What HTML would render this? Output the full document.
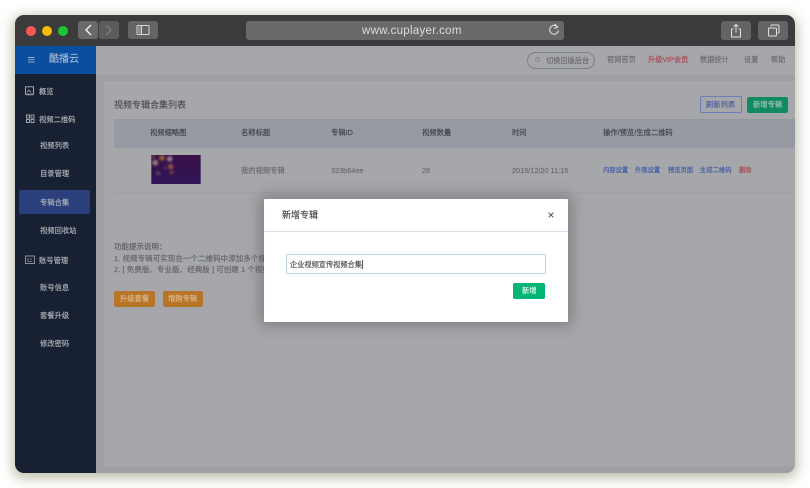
<!DOCTYPE html>
<html lang="zh">
<head>
<meta charset="utf-8">
<title>新增专辑</title>
<style>
html,body{margin:0;padding:0;width:810px;height:488px;overflow:hidden;background:#fff;}
body{position:relative;font-family:"Liberation Sans","Noto Sans CJK SC",sans-serif;}
.a{position:absolute;}
.t{position:absolute;white-space:nowrap;line-height:12px;height:12px;-webkit-text-stroke:.14px currentColor;}
#win{position:absolute;left:15px;top:15px;width:780px;height:458px;border-radius:9px;overflow:hidden;background:#a6a7ab;filter:blur(.32px);}
#shadow{position:absolute;left:15px;top:15px;width:780px;height:458px;border-radius:9px;box-shadow:0 3px 13px 2px rgba(95,95,50,.42);}
.btn{position:absolute;background:#646466;border-radius:3px;}
.m{color:#b0b3b9;font-size:7.3px;}
.h{color:#3f4146;font-size:7.3px;}
.n{color:#68696e;font-size:7.3px;}
.l{color:#3f58a6;font-size:6.3px;}
.o{color:#4f5055;font-size:7.3px;}
</style>
</head>
<body>
<div id="shadow"></div>
<div id="win">
  <!-- title bar -->
  <div class="a" style="left:0;top:0;width:780px;height:31px;background:#3b3b3d;"></div>
  <div class="a" style="left:11px;top:11px;width:10px;height:10px;border-radius:50%;background:#fc5753;"></div>
  <div class="a" style="left:27px;top:11px;width:10px;height:10px;border-radius:50%;background:#fdbc00;"></div>
  <div class="a" style="left:43px;top:11px;width:10px;height:10px;border-radius:50%;background:#19c832;"></div>

  <div class="btn" style="left:63px;top:6px;width:20px;height:18px;background:#69696b;"></div>
  <div class="btn" style="left:84px;top:6px;width:20px;height:18px;background:#5c5c5e;"></div>
  <svg class="a" style="left:63px;top:6px" width="41" height="18" viewBox="0 0 41 18" fill="none">
    <path d="M13 4 L8 9 L13 14" stroke="#f2f2f2" stroke-width="1.4"/>
    <path d="M28 4 L33 9 L28 14" stroke="#818183" stroke-width="1.2"/>
  </svg>
  <div class="btn" style="left:113px;top:6px;width:30px;height:18px;"></div>
  <svg class="a" style="left:113px;top:6px" width="30" height="18" viewBox="0 0 30 18" fill="none">
    <rect x="9" y="4.5" width="12" height="9" rx="1" stroke="#d8d8d8" stroke-width="1"/>
    <rect x="10" y="5.5" width="3" height="7" fill="#8e8e90"/>
    <path d="M13.5 5V13" stroke="#d8d8d8" stroke-width="1"/>
  </svg>

  <div class="btn" style="left:231px;top:6px;width:318px;height:19px;background:#69696b;"></div>
  <div class="t" style="left:347px;top:8.5px;line-height:15px;height:15px;font-size:11.5px;letter-spacing:.28px;color:#dcdcdc;-webkit-text-stroke:0;">www.cuplayer.com</div>
  <svg class="a" style="left:532px;top:8px" width="14" height="15" viewBox="0 0 14 15" fill="none">
    <path d="M10.6 4.2 A4.4 4.4 0 1 0 11.4 7.5" stroke="#e2e2e2" stroke-width="1"/>
    <path d="M7.5 0.8 L10.8 4 L7 5.4" stroke="#e2e2e2" stroke-width="1"/>
  </svg>

  <div class="btn" style="left:706px;top:6px;width:30px;height:19px;"></div>
  <svg class="a" style="left:706px;top:6px" width="30" height="19" viewBox="0 0 30 19" fill="none">
    <path d="M12.5 8H10.5V16H19.5V8H17.5" stroke="#e2e2e2" stroke-width="1"/>
    <path d="M15 11.5V3.5M12.7 5.8L15 3.5L17.3 5.8" stroke="#e2e2e2" stroke-width="1"/>
  </svg>
  <div class="btn" style="left:743px;top:6px;width:30px;height:19px;"></div>
  <svg class="a" style="left:743px;top:6px" width="30" height="19" viewBox="0 0 30 19" fill="none">
    <rect x="10.5" y="7" width="8" height="8" rx="1" stroke="#e2e2e2" stroke-width="1"/>
    <path d="M13 5.5V5A1 1 0 0 1 14 4H20A1 1 0 0 1 21 5V11A1 1 0 0 1 20 12H19.5" stroke="#e2e2e2" stroke-width="1"/>
  </svg>

  <!-- sidebar -->
  <div class="a" style="left:0;top:31px;width:81px;height:427px;background:#182133;"></div>
  <div class="a" style="left:0;top:31px;width:81px;height:28px;background:#0a4e9f;"></div>
  <svg class="a" style="left:13px;top:41px" width="7" height="8" viewBox="0 0 7 8"><path d="M0 1.5H6.5M0 3.8H6.5M0 6.1H6.5" stroke="#9fb4d0" stroke-width=".9"/></svg>
  <div class="t" style="left:34px;top:39px;font-size:10px;color:#a3b6cf;">酷播云</div>

  <svg class="a" style="left:10px;top:71px" width="10" height="10" viewBox="0 0 10 10" fill="none">
    <rect x=".5" y=".8" width="8" height="7.4" stroke="#a3a6ab"/>
    <path d="M2 6.5L4 4L6 6.5M1 8.8H8" stroke="#8f949b"/>
  </svg>
  <div class="t m" style="left:24px;top:71px;">概览</div>

  <svg class="a" style="left:11px;top:99px" width="9" height="10" viewBox="0 0 9 10" fill="none" stroke="#9aa0a6">
    <rect x=".5" y="1" width="3" height="3"/><rect x="5" y="1" width="3" height="3"/>
    <rect x=".5" y="5.5" width="3" height="3"/><rect x="5" y="5.5" width="3" height="3"/>
  </svg>
  <div class="t m" style="left:24px;top:99px;">视频二维码</div>
  <div class="t m" style="left:25px;top:125px;">视频列表</div>
  <div class="t m" style="left:25px;top:153px;">目录管理</div>

  <div class="a" style="left:4px;top:175px;width:71px;height:24px;background:#2a3f7b;border-radius:2px;"></div>
  <div class="t m" style="left:25px;top:182px;">专辑合集</div>
  <div class="t m" style="left:25px;top:210px;">视频回收站</div>

  <svg class="a" style="left:10px;top:240px" width="10" height="10" viewBox="0 0 10 10" fill="none">
    <rect x=".5" y="1" width="9" height="7.5" stroke="#989aa0" stroke-width=".9"/>
    <path d="M3 3V6.5M3 6.5H7M6 3V5" stroke="#8f9298" stroke-width=".8"/>
  </svg>
  <div class="t m" style="left:24px;top:240px;">账号管理</div>
  <div class="t m" style="left:25px;top:267px;">账号信息</div>
  <div class="t m" style="left:25px;top:295px;">套餐升级</div>
  <div class="t m" style="left:25px;top:323px;">修改密码</div>

  <!-- top nav -->
  <div class="a" style="left:81px;top:31px;width:699px;height:28px;background:#a6a7ab;"></div>
  <div class="a" style="left:81px;top:59px;width:699px;height:7px;background:#9f9fa4;"></div>
  <div class="a" style="left:81px;top:66px;width:8px;height:392px;background:#9f9fa4;"></div>
  <div class="a" style="left:81px;top:451px;width:699px;height:7px;background:#9f9fa4;"></div>
  <div class="a" style="left:89px;top:66px;width:691px;height:385px;background:#a6a7ab;border-radius:2px;"></div>

  <div class="a" style="left:512px;top:37px;width:66px;height:15px;border:1px solid #7d7f86;border-radius:9px;"></div>
  <div class="t" style="left:519px;top:40px;font-size:7px;color:#777a80;">&#9737;</div>
  <div class="t" style="left:531px;top:40px;font-size:7.2px;color:#696b71;">切换旧版后台</div>
  <div class="t" style="left:592px;top:39px;font-size:7.2px;color:#696b71;">官网首页</div>
  <div class="t" style="left:633px;top:39px;font-size:7.2px;color:#a8444f;">升级VIP会员</div>
  <div class="t" style="left:685px;top:39px;font-size:7.2px;color:#696b71;">数据统计</div>
  <div class="t" style="left:729px;top:39px;font-size:7.2px;color:#696b71;">设置</div>
  <div class="t" style="left:756px;top:39px;font-size:7.2px;color:#696b71;">帮助</div>

  <!-- card -->
  <div class="t" style="left:99px;top:84px;font-size:9px;color:#4c4e53;">视频专辑合集列表</div>
  <div class="a" style="left:685px;top:81px;width:40px;height:15px;border:1px solid #6a7fb8;border-radius:2px;box-sizing:content-box;"></div>
  <div class="t" style="left:691px;top:84px;font-size:7.3px;color:#4a5b9c;">刷新列表</div>
  <div class="a" style="left:732px;top:81.5px;width:41px;height:16px;background:#0f8a63;border-radius:2px;"></div>
  <div class="t" style="left:738px;top:84px;font-size:7.3px;color:#a6c2b6;">新增专辑</div>

  <div class="a" style="left:99px;top:104px;width:681px;height:29px;background:#979aa2;border-top:1px solid #96979c;box-sizing:border-box;"></div>
  <div class="t h" style="left:135px;top:112px;">视频缩略图</div>
  <div class="t h" style="left:226px;top:112px;">名称标题</div>
  <div class="t h" style="left:316px;top:112px;">专辑ID</div>
  <div class="t h" style="left:407px;top:112px;">视频数量</div>
  <div class="t h" style="left:497px;top:112px;">时间</div>
  <div class="t h" style="left:588px;top:112px;">操作/预览/生成二维码</div>

  <svg class="a" style="left:136px;top:139.5px;" width="50" height="29" viewBox="0 0 51 30">
    <defs>
      <linearGradient id="bg" x1="0" y1="0" x2="0" y2="1"><stop offset="0" stop-color="#3a1048"/><stop offset="1" stop-color="#2e1558"/></linearGradient>
      <filter id="bl"><feGaussianBlur stdDeviation="1.2"/></filter>
    </defs>
    <rect width="51" height="30" fill="url(#bg)"/>
    <g filter="url(#bl)">
      <circle cx="4" cy="8" r="3" fill="#8f7a7c"/>
      <circle cx="11" cy="3" r="3" fill="#8a5e3a"/>
      <circle cx="19" cy="4" r="3" fill="#8f7880"/>
      <circle cx="20" cy="12" r="3" fill="#885048"/>
      <circle cx="7" cy="19" r="2.5" fill="#593c5a"/>
      <circle cx="21" cy="18" r="2" fill="#74423f"/>
      <circle cx="2" cy="2" r="2" fill="#684038"/>
      <circle cx="14" cy="13" r="1.5" fill="#5a3450"/>
    </g>
  </svg>

  <div class="t n" style="left:226px;top:150px;">我的视频专辑</div>
  <div class="t n" style="left:316px;top:150px;">323b64ee</div>
  <div class="t n" style="left:407px;top:150px;">28</div>
  <div class="t n" style="left:497px;top:150px;">2019/12/20 11:16</div>
  <div class="t l" style="left:588px;top:150px;">内容设置</div>
  <div class="t l" style="left:620px;top:150px;">外观设置</div>
  <div class="t l" style="left:653px;top:150px;">预览页面</div>
  <div class="t l" style="left:685px;top:150px;">生成二维码</div>
  <div class="t" style="left:724px;top:150px;font-size:6.3px;color:#a8444f;">删除</div>
  <div class="a" style="left:99px;top:177px;width:681px;height:1px;background:#a0a1a5;"></div>

  <div class="t" style="left:99px;top:226px;font-size:7.5px;color:#5c5e63;">功能提示说明：</div>
  <div class="t" style="left:99px;top:238px;font-size:7.5px;letter-spacing:.05px;color:#63656a;">1. 视频专辑可实现在一个二维码中添加多个视频</div>
  <div class="t" style="left:99px;top:249px;font-size:7.5px;letter-spacing:.05px;color:#63656a;">2. [ 免费版、专业版、经典版 ] 可创建 1 个视频专辑</div>

  <div class="a" style="left:99px;top:276px;width:41px;height:16px;background:#b8752a;border-radius:2px;"></div>
  <div class="t" style="left:105px;top:278px;font-size:7.3px;color:#ddb98f;">升级套餐</div>
  <div class="a" style="left:148px;top:276px;width:40px;height:16px;background:#b8752a;border-radius:2px;"></div>
  <div class="t" style="left:153px;top:278px;font-size:7.3px;color:#ddb98f;">增购专辑</div>

  <!-- modal -->
  <div class="a" style="left:248.5px;top:183.5px;width:304px;height:123px;background:#fff;box-shadow:0 0 14px 4px rgba(60,60,65,.35);border-radius:1px;"></div>
  <div class="a" style="left:248.5px;top:216px;width:304px;height:1px;background:#dfe0e3;"></div>
  <div class="t" style="left:267px;top:194px;font-size:9px;color:#46484e;">新增专辑</div>
  <svg class="a" style="left:533px;top:197px" width="6" height="6" viewBox="0 0 6 6"><path d="M.7.7L5.3 5.3M5.3.7L.7 5.3" stroke="#4a4d55" stroke-width="1"/></svg>
  <div class="a" style="left:270.5px;top:239px;width:260px;height:20px;border:1px solid #c5d2ee;border-radius:2px;box-sizing:border-box;background:#fff;"></div>
  <div class="t" style="left:275px;top:244px;font-size:7.2px;color:#46484e;">企业视频宣传视频合集</div>
  <div class="a" style="left:347px;top:245px;width:.7px;height:9px;background:#55575c;"></div>
  <div class="a" style="left:498px;top:268px;width:32px;height:16px;background:#01b574;border-radius:2px;"></div>
  <div class="t" style="left:507px;top:270px;font-size:7.3px;color:#e6f7f0;">新增</div>
</div>
</body>
</html>
